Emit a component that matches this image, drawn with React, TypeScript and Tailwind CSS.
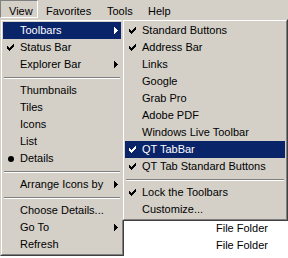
type Item =
  | { kind: "item"; label: string; mark?: "check" | "bullet"; sub?: boolean; active?: boolean }
  | { kind: "sep" };

const viewMenu: Item[] = [
  { kind: "item", label: "Toolbars", sub: true, active: true },
  { kind: "item", label: "Status Bar", mark: "check" },
  { kind: "item", label: "Explorer Bar", sub: true },
  { kind: "sep" },
  { kind: "item", label: "Thumbnails" },
  { kind: "item", label: "Tiles" },
  { kind: "item", label: "Icons" },
  { kind: "item", label: "List" },
  { kind: "item", label: "Details", mark: "bullet" },
  { kind: "sep" },
  { kind: "item", label: "Arrange Icons by", sub: true },
  { kind: "sep" },
  { kind: "item", label: "Choose Details..." },
  { kind: "item", label: "Go To", sub: true },
  { kind: "item", label: "Refresh" },
];

const toolbarsMenu: Item[] = [
  { kind: "item", label: "Standard Buttons", mark: "check" },
  { kind: "item", label: "Address Bar", mark: "check" },
  { kind: "item", label: "Links" },
  { kind: "item", label: "Google" },
  { kind: "item", label: "Grab Pro" },
  { kind: "item", label: "Adobe PDF" },
  { kind: "item", label: "Windows Live Toolbar" },
  { kind: "item", label: "QT TabBar", mark: "check", active: true },
  { kind: "item", label: "QT Tab Standard Buttons", mark: "check" },
  { kind: "sep" },
  { kind: "item", label: "Lock the Toolbars", mark: "check" },
  { kind: "item", label: "Customize..." },
];

function CheckMark() {
  return (
    <svg width="7" height="7" viewBox="0 0 7 7" shapeRendering="crispEdges" fill="currentColor">
      <path d="M6 0h1v1h-1z M5 1h2v1h-2z M0 2h1v1h-1z M4 2h3v1h-3z M0 3h2v1h-2z M3 3h3v1h-3z M0 4h5v1h-5z M1 5h3v1h-3z M2 6h1v1h-1z" />
    </svg>
  );
}

function Arrow() {
  return (
    <svg width="4" height="7" viewBox="0 0 4 7" shapeRendering="crispEdges" fill="currentColor">
      <path d="M0 0h1v7h-1z M1 1h1v5h-1z M2 2h1v3h-1z M3 3h1v1h-1z" />
    </svg>
  );
}

function Menu({ items, className }: { items: Item[]; className: string }) {
  return (
    <div className={`absolute border border-t-[#d4d0c8] border-l-[#d4d0c8] border-r-[#404040] border-b-[#404040] bg-[#d4d0c8] ${className}`}>
      <div className="border border-t-white border-l-white border-r-[#808080] border-b-[#808080] p-px">
        {items.map((it, i) =>
          it.kind === "sep" ? (
            <div key={i} className="flex h-[9px] flex-col justify-center px-px">
              <div className="h-px bg-[#808080]" />
              <div className="h-px bg-white" />
            </div>
          ) : (
            <div
              key={i}
              className={`flex h-[17px] items-center ${it.active ? "bg-[#0a246a] text-white" : "text-black"}`}
            >
              <div className="flex w-[17px] shrink-0 items-center pl-[4px]">
                {it.mark === "check" && <CheckMark />}
                {it.mark === "bullet" && <div className="ml-[1px] h-[6px] w-[6px] rounded-full bg-black" />}
              </div>
              <span className="flex-1 whitespace-nowrap leading-[13px]">{it.label}</span>
              {it.sub && (
                <span className="mr-[3px] flex">
                  <Arrow />
                </span>
              )}
            </div>
          )
        )}
      </div>
    </div>
  );
}

export default function App() {
  return (
    <div className="relative h-[258px] w-[288px] overflow-hidden bg-white font-['Liberation_Sans',Arial,sans-serif] text-[11px] text-black">
      {/* menu bar */}
      <div className="flex h-[19px] bg-[#d4d0c8] leading-[13px]">
        <div className="h-[18px] w-[38px] border border-t-[#808080] border-l-[#808080] border-r-white border-b-white pl-[8px] pt-[4px]">
          View
        </div>
        <div className="w-[61px] pl-[8px] pt-[5px]">Favorites</div>
        <div className="w-[41px] pl-[8px] pt-[5px]">Tools</div>
        <div className="pl-[8px] pt-[5px]">Help</div>
      </div>

      {/* window content behind the menus */}
      <div className="flex flex-col pl-[216px] pt-[201px]">
        <div className="flex h-[17px] items-center leading-[13px]">File Folder</div>
        <div className="flex h-[17px] items-center leading-[13px]">File Folder</div>
        <div className="flex h-[17px] items-center leading-[13px]">File Folder</div>
      </div>

      <Menu items={viewMenu} className="left-0 top-[19px] w-[124px]" />
      <Menu items={toolbarsMenu} className="left-[122px] top-[19px] w-[166px]" />
    </div>
  );
}
